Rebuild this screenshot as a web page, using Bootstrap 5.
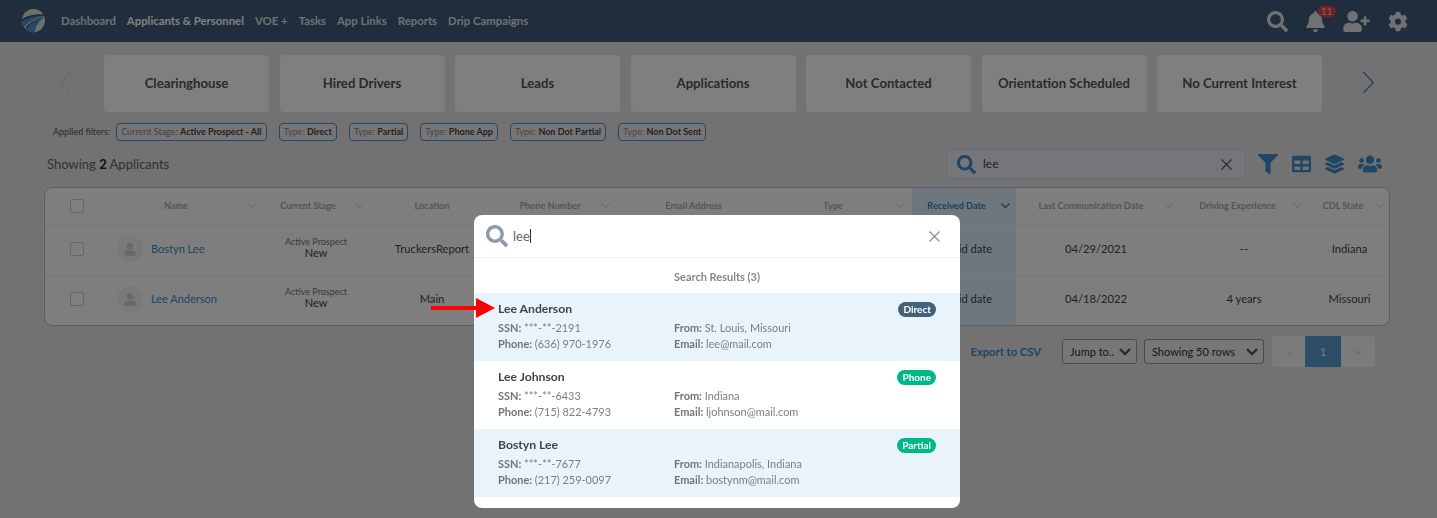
<!doctype html>
<html lang="en"><head><meta charset="utf-8"><title>Applicants</title>
<link href="https://cdn.jsdelivr.net/npm/bootstrap@5.3.0/dist/css/bootstrap.min.css" rel="stylesheet">
<style>
html,body{height:518px;overflow:hidden}
body{font-family:Lato,"Liberation Sans",sans-serif;background:#e4e4e4;color:#333;font-size:12px;position:relative}
.top-bar{height:42px;background:#3e5a7a;padding:0 29px 0 21px}
.top-bar .brand-logo{width:24px;height:26px;margin-right:16px;display:block;margin-bottom:1px}
.top-link{font-size:11.35px;font-weight:700;color:#dee2e6;margin-right:11px;text-decoration:none;white-space:nowrap}
.top-link.on{color:#fff}
.top-ico{fill:#dfe3e8;display:block}
.top-gap{margin-left:18px}
.bell-wrap{position:relative}
.bell-count{position:absolute;left:12px;top:-5px;background:#e04545;color:#f4c8c8;font-size:10px;line-height:11px;padding:0 3px;border-radius:5px;font-weight:400}
.tile-strip{padding-top:13px;height:70px}
.chev-slot{width:104px;padding-left:59px;padding-bottom:3px;height:57px}
.chev-next{height:57px;padding-bottom:3px}
.tile{width:165px;height:57px;margin-right:10.5px;background:#fff;border-radius:4px;font-size:13.2px;font-weight:700;color:#555;display:flex;align-items:center;justify-content:center;white-space:nowrap}
.strip-rule{width:1px;height:54px;background:#d8d8d8;margin:2px 28px 0 0}
.filter-row{padding-left:53px;margin-top:11px;height:18px;font-size:9px;gap:12px}
.filter-row .lbl{color:#555;margin-right:-6px}
.chip{border:1px solid #4a90c8;border-radius:4px;height:18px;padding:0 4px;line-height:16px;color:#888;background:#ececec;white-space:nowrap;font-size:9px}
.chip b{color:#444;font-weight:700}
.tool-row{height:30px;margin-top:8px;padding-left:47px}
.show-txt{font-size:13px;color:#666;padding-top:1px}
.show-txt b{color:#222}
.find-box{width:300px;height:30px;margin-left:auto;background:#e8edf2;border:1px solid #cfdfec;border-radius:3px;padding:0 13px 0 10px;font-size:12px;color:#444}
.find-box .q{margin-left:7px}
.tool-ico{fill:#428bca;display:block}
.tools{width:191px;padding-left:12px;gap:14px}
.grid-wrap{margin:8px 47px 0 44px;border:1px solid #bdbdbd;border-radius:8px;background:#fcfcfc;overflow:hidden;height:139px}
.grid-tbl{table-layout:fixed;width:1346px;margin:0;--bs-table-bg:transparent;font-size:11.2px}
.grid-tbl th{height:37px;font-size:9.1px;font-weight:700;color:#aaa;text-align:center;vertical-align:middle;padding:0;position:relative;border-bottom:1px solid #eee;white-space:nowrap}
.grid-tbl td{height:50px;text-align:center;vertical-align:middle;padding:0 0 2px;color:#444;border-bottom:1px solid #eee}
.grid-tbl tr:last-child td{border-bottom:0}
.th-car{position:absolute;top:15px;width:9px;height:5px;stroke:#ccc;fill:none;stroke-width:1}
.grid-tbl .sorted{background:#dceefb}
.grid-tbl th.sorted{color:#3f82bd}
.sorted .th-car{stroke:#428bca;stroke-width:1.6}
.tick{width:14px;height:14px;border:1px solid #ccc;border-radius:2px;background:#fff;display:block;margin:0 0 0 25px}
.who{padding-left:11px;gap:8px}
.who a{color:#3e8bc8;text-decoration:none;font-size:11px;white-space:nowrap}
.avatar{width:26px;height:26px;border-radius:50%;background:#f2f2f2;display:flex;align-items:center;justify-content:center}
.avatar svg{fill:#d0d0d0;width:12px;height:13px}
.grid-tbl td.stage{padding:0 2px 5px 0}
.grid-tbl td.state-cell{padding-right:4px}
.stage-a{font-size:9px;color:#777;line-height:11px;display:block}
.stage-b{font-size:11px;color:#444;line-height:12px;display:block}
.foot-row{height:31px;margin:10px 62px 0 0;gap:7px}
.csv{font-size:11.2px;font-weight:700;color:#428bca;margin-right:14px;text-decoration:none;padding-top:1px}
.pick{height:25px;font-size:11px;padding:0 20px 0 7px;border:1px solid #999;border-radius:3px;background-color:#eee;background-image:url("data:image/svg+xml,%3csvg xmlns='http://www.w3.org/2000/svg' viewBox='0 0 12 8'%3e%3cpath fill='none' stroke='%23555' stroke-width='2.4' d='M1 1l5 5 5-5'/%3e%3c/svg%3e");background-position:right 5px center;background-size:12px 8px;color:#333;width:auto;line-height:23px}
.pick-a{width:75px}.pick-b{width:120px}
.pager{margin:0 0 0 1px;height:31px}
.pager .page-item .page-link{border:0;margin:0;height:31px;line-height:31px;padding:0;width:33px;text-align:center;background:#f6f6f6;color:#ccc;font-size:10px;border-radius:0}
.pager .page-item:first-child .page-link{border-radius:3px 0 0 3px}
.pager .page-item:last-child .page-link{border-radius:0 3px 3px 0;width:34px}
.pager .page-item.active .page-link{background:#5b9ad0;color:#e8f0f8;width:36px;font-size:12px}
.search-panel{position:absolute;left:474px;top:215px;width:486px;height:293px;z-index:1060;border:0;border-radius:8px;background:#fff;overflow:hidden}
.panel-head{height:43px;border-bottom:1px solid #eee;padding:0 20px 0 12px}
.panel-head svg.mag{fill:#8e9aa6;width:22px;height:22px}
.typed{font-size:13px;margin-left:5px;color:#666;border-right:1px solid #333;line-height:14px}
.res-title{height:35px;padding-left:200px;line-height:37px;font-size:11px;font-weight:700;color:#808890}
.res-item{height:68px;padding:7px 24px 0;color:#7a7f86;font-size:10.95px;line-height:16px;display:block;border:0;border-radius:0;background:#fff}
.res-item.tint{background:#e8f3fc}
.res-name{font-size:12.2px;font-weight:700;color:#444;line-height:18px;margin-bottom:2px}
.res-item b{color:#6f757c}
.res-col{width:176px}
.res-pill{font-size:10px;font-weight:700;line-height:15px;height:15px;padding:0 5px;border-radius:8px;color:#fff;margin-top:2px}
.pill-d{background:#456079}.pill-g{background:#00b887}
.red-arrow{position:absolute;left:431px;top:298px;width:64px;height:20px;z-index:1070}
</style></head><body>
<svg width="0" height="0" class="d-none"><defs>
<symbol id="i-search" viewBox="0 0 512 512"><path d="M505 442.7L405.3 343c-4.5-4.5-10.6-7-17-7H372c27.6-35.3 44-79.7 44-128C416 93.1 322.9 0 208 0S0 93.1 0 208s93.1 208 208 208c48.3 0 92.7-16.4 128-44v16.3c0 6.4 2.5 12.5 7 17l99.7 99.7c9.4 9.4 24.6 9.4 33.9 0l28.3-28.3c9.4-9.4 9.4-24.6.1-34zM208 336c-70.7 0-128-57.2-128-128 0-70.7 57.2-128 128-128 70.7 0 128 57.2 128 128 0 70.7-57.2 128-128 128z"/></symbol>
<symbol id="i-bell" viewBox="0 0 448 512"><path d="M224 512c35.32 0 63.97-28.65 63.97-64H160.03c0 35.35 28.65 64 63.97 64zm215.39-149.71c-19.32-20.76-55.47-51.99-55.47-154.29 0-77.7-54.48-139.9-127.94-155.16V32c0-17.67-14.32-32-31.98-32s-31.98 14.33-31.98 32v20.84C118.56 68.1 64.08 130.3 64.08 208c0 102.3-36.15 133.53-55.47 154.29-6 6.45-8.66 14.16-8.61 21.71.11 16.4 12.98 32 32.1 32h383.8c19.12 0 32-15.6 32.1-32 .05-7.55-2.61-15.27-8.61-21.71z"/></symbol>
<symbol id="i-uplus" viewBox="0 0 640 512"><path d="M624 208h-64v-64c0-8.8-7.2-16-16-16h-32c-8.8 0-16 7.2-16 16v64h-64c-8.8 0-16 7.2-16 16v32c0 8.8 7.2 16 16 16h64v64c0 8.8 7.2 16 16 16h32c8.8 0 16-7.2 16-16v-64h64c8.8 0 16-7.2 16-16v-32c0-8.8-7.2-16-16-16zm-400 48c70.7 0 128-57.3 128-128S294.7 0 224 0 96 57.3 96 128s57.3 128 128 128zm89.6 32h-16.7c-22.2 10.2-46.9 16-72.9 16s-50.6-5.8-72.9-16h-16.7C60.2 288 0 348.2 0 422.4V464c0 26.5 21.5 48 48 48h352c26.5 0 48-21.5 48-48v-41.6c0-74.2-60.2-134.4-134.4-134.4z"/></symbol>
<symbol id="i-cog" viewBox="0 0 512 512"><path d="M487.4 315.7l-42.6-24.6c4.3-23.2 4.3-47 0-70.2l42.6-24.6c4.9-2.8 7.1-8.6 5.5-14-11.1-35.6-30-67.8-54.7-94.6-3.8-4.1-10-5.1-14.8-2.3L380.8 110c-17.9-15.4-38.5-27.3-60.8-35.1V25.8c0-5.6-3.9-10.5-9.4-11.7-36.7-8.2-74.3-7.8-109.2 0-5.5 1.2-9.4 6.1-9.4 11.7V75c-22.2 7.9-42.8 19.8-60.8 35.1L88.7 85.5c-4.9-2.8-11-1.9-14.8 2.3-24.7 26.7-43.6 58.9-54.7 94.6-1.7 5.4.6 11.2 5.5 14L67.3 221c-4.3 23.2-4.3 47 0 70.2l-42.6 24.6c-4.9 2.8-7.1 8.6-5.5 14 11.1 35.6 30 67.8 54.7 94.6 3.8 4.1 10 5.1 14.8 2.3l42.6-24.6c17.9 15.4 38.5 27.3 60.8 35.1v49.2c0 5.6 3.9 10.5 9.4 11.7 36.7 8.2 74.3 7.8 109.2 0 5.5-1.2 9.4-6.1 9.4-11.7v-49.2c22.2-7.9 42.8-19.8 60.8-35.1l42.6 24.6c4.9 2.8 11 1.9 14.8-2.3 24.7-26.7 43.6-58.9 54.7-94.6 1.5-5.5-.7-11.3-5.6-14.1zM256 336c-44.1 0-80-35.9-80-80s35.9-80 80-80 80 35.9 80 80-35.9 80-80 80z"/></symbol>
<symbol id="i-filter" viewBox="0 0 512 512"><path d="M487.976 0H24.028C2.71 0-8.047 25.866 7.058 40.971L192 225.941V432c0 7.831 3.821 15.17 10.237 19.662l80 55.98C298.02 518.69 320 507.493 320 487.98V225.941l184.947-184.97C520.021 25.896 509.338 0 487.976 0z"/></symbol>
<symbol id="i-table" viewBox="0 0 512 512"><path d="M464 32H48C21.49 32 0 53.49 0 80v352c0 26.51 21.49 48 48 48h416c26.51 0 48-21.49 48-48V80c0-26.51-21.49-48-48-48zM224 416H64v-96h160v96zm0-160H64v-96h160v96zm224 160H288v-96h160v96zm0-160H288v-96h160v96z"/></symbol>
<symbol id="i-layers" viewBox="0 0 512 512"><path d="M12.41 148.02l232.94 105.67c6.8 3.09 14.49 3.09 21.29 0l232.94-105.67c16.55-7.51 16.55-32.52 0-40.03L266.65 2.31a25.607 25.607 0 0 0-21.29 0L12.41 107.98c-16.55 7.51-16.55 32.53 0 40.04zm487.18 88.28l-58.09-26.33-161.64 73.27c-7.56 3.43-15.59 5.17-23.86 5.17s-16.29-1.74-23.86-5.17L70.51 209.97l-58.1 26.33c-16.55 7.5-16.55 32.5 0 40l232.94 105.59c6.8 3.08 14.49 3.08 21.29 0L499.59 276.3c16.55-7.5 16.55-32.5 0-40zm0 127.8l-57.87-26.23-161.86 73.37c-7.56 3.43-15.59 5.17-23.86 5.17s-16.29-1.74-23.86-5.17L70.29 337.87 12.41 364.1c-16.55 7.5-16.55 32.5 0 40l232.94 105.59c6.8 3.08 14.49 3.08 21.29 0L499.59 404.1c16.55-7.5 16.55-32.5 0-40z"/></symbol>
<symbol id="i-users" viewBox="0 0 640 512"><path d="M96 224c35.3 0 64-28.7 64-64s-28.7-64-64-64-64 28.7-64 64 28.7 64 64 64zm448 0c35.3 0 64-28.7 64-64s-28.7-64-64-64-64 28.7-64 64 28.7 64 64 64zm32 32h-64c-17.6 0-33.5 7.1-45.1 18.6 40.3 22.1 68.9 62 75.1 109.4h66c17.7 0 32-14.3 32-32v-32c0-35.3-28.7-64-64-64zm-256 0c61.9 0 112-50.1 112-112S381.9 32 320 32 208 82.1 208 144s50.1 112 112 112zm76.8 32h-8.3c-20.8 10-43.9 16-68.5 16s-47.6-6-68.5-16h-8.3C179.6 288 128 339.6 128 403.2V432c0 26.5 21.5 48 48 48h288c26.5 0 48-21.5 48-48v-28.8c0-63.6-51.6-115.2-115.2-115.2zm-223.7-13.4C161.5 263.1 145.6 256 128 256H64c-35.3 0-64 28.7-64 64v32c0 17.7 14.3 32 32 32h65.9c6.3-47.4 34.9-87.3 75.2-109.4z"/></symbol>
<symbol id="i-user" viewBox="0 0 448 512"><path d="M224 256c70.7 0 128-57.3 128-128S294.7 0 224 0 96 57.3 96 128s57.3 128 128 128zm89.6 32h-16.7c-22.2 10.2-46.9 16-72.9 16s-50.6-5.800-72.9-16h-16.7C60.2 288 0 348.2 0 422.4V464c0 26.5 21.5 48 48 48h352c26.5 0 48-21.5 48-48v-41.6c0-74.2-60.2-134.4-134.4-134.4z"/></symbol>
<symbol id="i-car" viewBox="0 0 9 5"><path d="M.5.5l4 4 4-4"/></symbol>
</defs></svg>

<nav class="top-bar d-flex align-items-center">
  <svg class="brand-logo" viewBox="0 0 24 26">
    <circle cx="12.500" cy="12.500" r="11.500" fill="#dedede"/>
    <path d="M1 11C6 7.500 15 5.500 24 6.500L24 8C15 8 8 10.500 1 14z" fill="#3e5a7a"/>
    <path d="M.5 13.500C7 9.500 15 7.500 23.500 8 15 10 8 13 3.500 19 1.500 17.500.5 15.500.5 13.500z" fill="#4a8fd0"/>
    <path d="M4.500 20C8 14.500 15 10.500 23.800 8.800 17 12.500 12.500 16 9.500 23 7.500 22.500 5.500 21.500 4.500 20z" fill="#3e5a7a"/>
    <path d="M6 20.500C9.500 15 16 11 23.800 8.800 18 13 14.500 18 13.500 25 11 25 8 23 6 20.500z" fill="#4a8fd0"/>
  </svg>
  <a class="top-link" href="#">Dashboard</a>
  <a class="top-link on" href="#">Applicants &amp; Personnel</a>
  <a class="top-link" href="#">VOE +</a>
  <a class="top-link" href="#">Tasks</a>
  <a class="top-link" href="#">App Links</a>
  <a class="top-link" href="#">Reports</a>
  <a class="top-link" href="#">Drip Campaigns</a>
  <div class="ms-auto d-flex align-items-center">
    <svg class="top-ico" width="21" height="21"><use href="#i-search"/></svg>
    <div class="bell-wrap top-gap"><svg class="top-ico" width="19" height="21"><use href="#i-bell"/></svg><span class="bell-count">11</span></div>
    <svg class="top-ico top-gap" width="27" height="21"><use href="#i-uplus"/></svg>
    <svg class="top-ico top-gap" width="20" height="21"><use href="#i-cog"/></svg>
  </div>
</nav>

<section class="tile-strip d-flex align-items-start">
  <div class="chev-slot d-flex align-items-center"><svg width="13" height="23" viewBox="0 0 13 24" fill="none" stroke="#d0d0d0" stroke-width="1.2"><path d="M12 1L1.500 12 12 23"/></svg></div>
  <div class="tile">Clearinghouse</div><div class="tile">Hired Drivers</div><div class="tile">Leads</div><div class="tile">Applications</div><div class="tile">Not Contacted</div><div class="tile">Orientation Scheduled</div><div class="tile">No Current Interest</div>
  <div class="strip-rule"></div>
  <div class="chev-next d-flex align-items-center"><svg width="13" height="23" viewBox="0 0 13 24" fill="none" stroke="#428bca" stroke-width="1.4"><path d="M1 1l10.500 11L1 23"/></svg></div>
</section>

<div class="filter-row d-flex align-items-center">
  <span class="lbl">Applied filters:</span>
  <span class="chip">Current Stage: <b>Active Prospect - All</b></span>
  <span class="chip">Type: <b>Direct</b></span>
  <span class="chip">Type: <b>Partial</b></span>
  <span class="chip">Type: <b>Phone App</b></span>
  <span class="chip">Type: <b>Non Dot Partial</b></span>
  <span class="chip">Type: <b>Non Dot Sent</b></span>
</div>

<div class="tool-row d-flex align-items-center">
  <div class="show-txt">Showing <b>2</b> Applicants</div>
  <div class="find-box d-flex align-items-center">
    <svg width="19" height="19" class="tool-ico"><use href="#i-search"/></svg>
    <span class="q">lee</span>
    <svg class="ms-auto" width="11" height="11" viewBox="0 0 11 11" stroke="#555" stroke-width="1.2"><path d="M.5.5l10 10M10.500.5l-10 10"/></svg>
  </div>
  <div class="tools d-flex align-items-center">
    <svg class="tool-ico" width="20" height="20"><use href="#i-filter"/></svg>
    <svg class="tool-ico" width="19" height="20"><use href="#i-table"/></svg>
    <svg class="tool-ico" width="19" height="20"><use href="#i-layers"/></svg>
    <svg class="tool-ico" width="24" height="20"><use href="#i-users"/></svg>
  </div>
</div>

<div class="grid-wrap">
<table class="table grid-tbl">
<colgroup><col style="width:61px"><col style="width:155px"><col style="width:112px"><col style="width:118px"><col style="width:120px"><col style="width:165px"><col style="width:136px"><col style="width:104px"><col style="width:160px"><col style="width:136px"><col style="width:79px"></colgroup>
<thead><tr>
<th><span class="tick"></span></th>
<th style="padding-right:15px">Name<svg class="th-car" style="right:4px"><use href="#i-car"/></svg></th>
<th style="padding-right:18px">Current Stage<svg class="th-car" style="right:9px"><use href="#i-car"/></svg></th>
<th>Location</th>
<th style="padding-right:2px">Phone Number<svg class="th-car" style="right:1px"><use href="#i-car"/></svg></th>
<th>Email Address</th>
<th style="padding-right:22px">Type<svg class="th-car" style="right:7px"><use href="#i-car"/></svg></th>
<th class="sorted" style="padding-right:15px">Received Date<svg class="th-car" style="right:6px"><use href="#i-car"/></svg></th>
<th style="padding-right:10px">Last Communication Date<svg class="th-car" style="right:3px"><use href="#i-car"/></svg></th>
<th style="padding-right:13px">Driving Experience<svg class="th-car" style="right:10px"><use href="#i-car"/></svg></th>
<th style="padding-right:17px">CDL State<svg class="th-car" style="right:7px"><use href="#i-car"/></svg></th>
</tr></thead>
<tbody>
<tr><td><span class="tick"></span></td><td><div class="who d-flex align-items-center"><span class="avatar"><svg><use href="#i-user"/></svg></span><a href="#">Bostyn Lee</a></div></td><td class="stage"><span class="stage-a">Active Prospect</span><span class="stage-b">New</span></td><td>TruckersReport</td><td></td><td></td><td></td><td class="sorted">Invalid date</td><td>04/29/2021</td><td>--</td><td class="state-cell">Indiana</td></tr>
<tr><td><span class="tick"></span></td><td><div class="who d-flex align-items-center"><span class="avatar"><svg><use href="#i-user"/></svg></span><a href="#">Lee Anderson</a></div></td><td class="stage"><span class="stage-a">Active Prospect</span><span class="stage-b">New</span></td><td>Main</td><td></td><td></td><td></td><td class="sorted">Invalid date</td><td>04/18/2022</td><td>4 years</td><td class="state-cell">Missouri</td></tr>
</tbody></table>
</div>

<div class="foot-row d-flex align-items-center justify-content-end">
  <a class="csv" href="#">Export to CSV</a>
  <select class="form-select pick pick-a"><option>Jump to..</option></select>
  <select class="form-select pick pick-b"><option>Showing 50 rows</option></select>
  <ul class="pagination pager">
    <li class="page-item"><a class="page-link" href="#">«</a></li>
    <li class="page-item active"><a class="page-link" href="#">1</a></li>
    <li class="page-item"><a class="page-link" href="#">»</a></li>
  </ul>
</div>

<div class="modal-backdrop show"></div>

<div class="search-panel modal-content">
  <div class="panel-head d-flex align-items-center">
    <svg class="mag"><use href="#i-search"/></svg>
    <span class="typed">lee</span>
    <svg class="ms-auto" width="11" height="11" viewBox="0 0 11 11" stroke="#8a8f95" stroke-width="1.2"><path d="M.5.5l10 10M10.500.5l-10 10"/></svg>
  </div>
  <div class="res-title">Search Results (3)</div>
  <div class="list-group list-group-flush">
    <div class="list-group-item res-item tint">
      <div class="d-flex justify-content-between"><div class="res-name">Lee Anderson</div><span class="res-pill pill-d">Direct</span></div>
      <div class="d-flex"><div class="res-col"><b>SSN:</b> ***-**-2191<br><b>Phone:</b> (636) 970-1976</div><div><b>From:</b> St. Louis, Missouri<br><b>Email:</b> lee@mail.com</div></div>
    </div>
    <div class="list-group-item res-item">
      <div class="d-flex justify-content-between"><div class="res-name">Lee Johnson</div><span class="res-pill pill-g">Phone</span></div>
      <div class="d-flex"><div class="res-col"><b>SSN:</b> ***-**-6433<br><b>Phone:</b> (715) 822-4793</div><div><b>From:</b> Indiana<br><b>Email:</b> ljohnson@mail.com</div></div>
    </div>
    <div class="list-group-item res-item tint">
      <div class="d-flex justify-content-between"><div class="res-name">Bostyn Lee</div><span class="res-pill pill-g">Partial</span></div>
      <div class="d-flex"><div class="res-col"><b>SSN:</b> ***-**-7677<br><b>Phone:</b> (217) 259-0097</div><div><b>From:</b> Indianapolis, Indiana<br><b>Email:</b> bostynm@mail.com</div></div>
    </div>
  </div>
</div>

<svg class="red-arrow" viewBox="0 0 64 20"><path d="M0 8h45V0l19 10-19 10v-8H0z" fill="#f00"/></svg>
</body></html>
